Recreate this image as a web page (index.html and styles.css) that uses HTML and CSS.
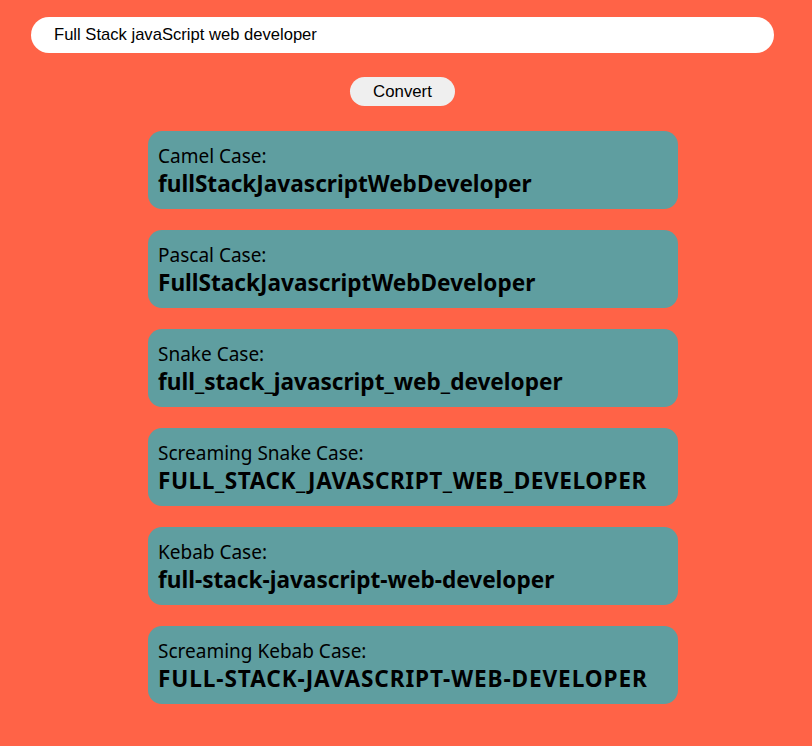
FILE: index.html
```html
<!DOCTYPE html>
<html>
<head>
<meta charset="utf-8">
<link rel="stylesheet" href="styles.css">
</head>
<body>
<div class="app">
  <input class="text-input" type="text" value="Full Stack javaScript web developer">
  <button class="convert">Convert</button>
  <div class="cards">
    <div class="card"><div class="label">Camel Case:</div><div class="value">fullStackJavascriptWebDeveloper</div></div>
    <div class="card"><div class="label">Pascal Case:</div><div class="value">FullStackJavascriptWebDeveloper</div></div>
    <div class="card"><div class="label">Snake Case:</div><div class="value">full_stack_javascript_web_developer</div></div>
    <div class="card"><div class="label">Screaming Snake Case:</div><div class="value value-caps">FULL_STACK_JAVASCRIPT_WEB_DEVELOPER</div></div>
    <div class="card"><div class="label">Kebab Case:</div><div class="value">full-stack-javascript-web-developer</div></div>
    <div class="card"><div class="label">Screaming Kebab Case:</div><div class="value value-caps-wide">FULL-STACK-JAVASCRIPT-WEB-DEVELOPER</div></div>
  </div>
</div>
</body>
</html>
```
FILE: styles.css
```css
html, body {
  margin: 0;
  padding: 0;
  background: #ff6347;
}
.app {
  display: flex;
  flex-direction: column;
  align-items: flex-start;
  padding-top: 17px;
}
.text-input {
  box-sizing: border-box;
  margin-left: 31px;
  width: 743px;
  height: 36px;
  border: none;
  border-radius: 18px;
  background: #fff;
  padding: 0 0 0 23px;
  font-family: "Liberation Sans", Arial, sans-serif;
  font-size: 16.6px;
  color: #000;
  outline: none;
}
.convert {
  box-sizing: border-box;
  margin: 24px 0 0 350px;
  width: 105px;
  height: 29px;
  border: none;
  border-radius: 15px;
  background: #efefef;
  font-family: "Liberation Sans", Arial, sans-serif;
  font-size: 16.8px;
  color: #000;
  padding: 0;
}
.cards {
  margin: 25px 0 0 148px;
  display: flex;
  flex-direction: column;
  gap: 21px;
  width: 530px;
}
.card {
  box-sizing: border-box;
  height: 78px;
  background: #5f9ea0;
  border-radius: 14px;
  padding: 13px 10px 0 10px;
  font-family: "Noto Sans", "Open Sans", sans-serif;
  color: #000;
}
.label {
  font-size: 19px;
  line-height: 25px;
}
.value {
  font-size: 22.6px;
  font-weight: bold;
  line-height: 30px;
}
.value-caps {
  letter-spacing: 0.55px;
}
.value-caps-wide {
  letter-spacing: 0.9px;
}
```
